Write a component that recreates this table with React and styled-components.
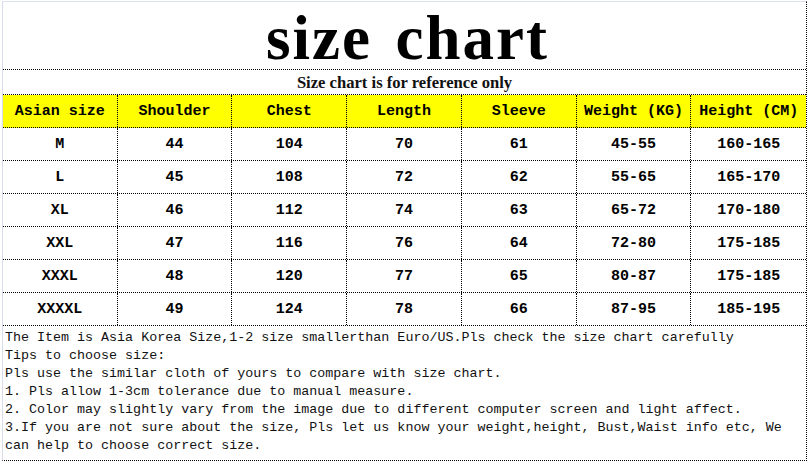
import styled, { createGlobalStyle } from 'styled-components';

const GlobalStyle = createGlobalStyle`
  html, body {
    margin: 0;
    padding: 0;
    background: #ffffff;
  }
`;

const Frame = styled.div`
  box-sizing: border-box;
  width: 805px;
  height: 460px;
  margin: 1px 0 0 2px;
  border-top: 1px solid #dde0ee;
  border-left: 1px solid #d8dceb;
  border-right: 1px dotted #000;
  border-bottom: 1px dotted #000;
  display: flex;
  flex-direction: column;
`;

const TitleRow = styled.div`
  height: 67px;
  border-bottom: 1px dotted #000;
  display: flex;
  align-items: center;
  justify-content: center;
`;

const Title = styled.h1`
  margin: 0;
  padding: 6px 0 0 6px;
  font-family: 'Liberation Serif', 'Times New Roman', serif;
  font-weight: 700;
  font-size: 63px;
  letter-spacing: 2px;
  word-spacing: 6px;
  line-height: 1;
  color: #000;
`;

const SubRow = styled.div`
  height: 25px;
  border-bottom: 1px dotted #000;
  display: flex;
  align-items: center;
  justify-content: center;
  padding-top: 1px;
  box-sizing: border-box;
  font-family: 'Liberation Serif', 'Times New Roman', serif;
  font-weight: 700;
  font-size: 16.6px;
  color: #111;
`;

const Row = styled.div`
  display: grid;
  grid-template-columns: repeat(7, 1fr);
  height: 32px;
  border-bottom: 1px dotted #000;
  background: ${({ $head }) => ($head ? '#ffff00' : '#ffffff')};
`;

const Cell = styled.div`
  display: flex;
  align-items: center;
  justify-content: center;
  padding-top: 1px;
  border-right: 1px dotted #000;
  font-family: 'Liberation Mono', 'Courier New', monospace;
  font-weight: 700;
  font-size: 15px;
  color: #000;
  white-space: nowrap;

  &:last-child {
    border-right: none;
  }
`;

const Notes = styled.div`
  flex: 1;
  padding: 3px 0 0 2px;
  font-family: 'Liberation Mono', 'Courier New', monospace;
  font-size: 13.35px;
  line-height: 18px;
  color: #111;
`;

const Line = styled.div`
  white-space: nowrap;
`;

const headers = [
  'Asian size',
  'Shoulder',
  'Chest',
  'Length',
  'Sleeve',
  'Weight (KG)',
  'Height (CM)',
];

const rows = [
  ['M', '44', '104', '70', '61', '45-55', '160-165'],
  ['L', '45', '108', '72', '62', '55-65', '165-170'],
  ['XL', '46', '112', '74', '63', '65-72', '170-180'],
  ['XXL', '47', '116', '76', '64', '72-80', '175-185'],
  ['XXXL', '48', '120', '77', '65', '80-87', '175-185'],
  ['XXXXL', '49', '124', '78', '66', '87-95', '185-195'],
];

const notes = [
  'The Item is Asia Korea Size,1-2 size smallerthan Euro/US.Pls check the size chart carefully',
  'Tips to choose size:',
  'Pls use the similar cloth of yours to compare with size chart.',
  '1. Pls allow 1-3cm tolerance due to manual measure.',
  '2. Color may slightly vary from the image due to different computer screen and light affect.',
  '3.If you are not sure about the size, Pls let us know your weight,height, Bust,Waist info etc, We',
  'can help to choose correct size.',
];

function App() {
  return (
    <>
      <GlobalStyle />
      <Frame>
        <TitleRow>
          <Title>size chart</Title>
        </TitleRow>
        <SubRow>Size chart is for reference only</SubRow>
        <Row $head>
          {headers.map((h) => (
            <Cell key={h}>{h}</Cell>
          ))}
        </Row>
        {rows.map((r) => (
          <Row key={r[0]}>
            {r.map((v, i) => (
              <Cell key={i}>{v}</Cell>
            ))}
          </Row>
        ))}
        <Notes>
          {notes.map((n) => (
            <Line key={n}>{n}</Line>
          ))}
        </Notes>
      </Frame>
    </>
  );
}

export default App;
